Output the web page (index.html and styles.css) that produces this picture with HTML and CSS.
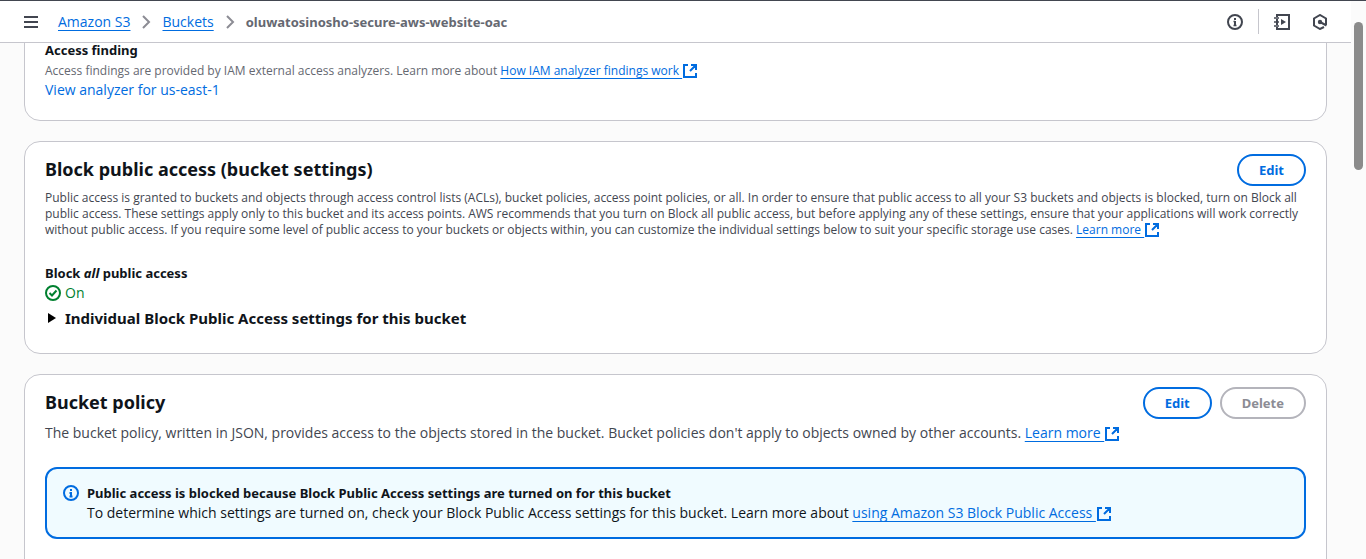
FILE: index.html
```html
<!DOCTYPE html>
<html lang="en">
<head>
<meta charset="utf-8">
<title>Bucket permissions - Amazon S3</title>
<link rel="stylesheet" href="styles.css">
</head>
<body>
<svg class="sprite" aria-hidden="true">
  <symbol id="external" viewBox="0 0 14 14"><path d="M5 1H1v12h12V9M8 1h5v5M12.5 1.5 7 7"/></symbol>
  <symbol id="info" viewBox="0 0 16 16"><circle cx="8" cy="8" r="7"/><path d="M8 4v2M6.500 8H8v4M6.500 11.500h3"/></symbol>
  <symbol id="chevron" viewBox="0 0 16 16"><path d="m5 2 6 6-6 6"/></symbol>
</svg>
<div class="shell">
  <div class="page">
    <header class="topbar">
      <button class="icon-button menu" type="button" aria-label="Open navigation">
        <svg class="icon" viewBox="0 0 16 16"><path d="M1 3h14M1 8h14M1 13h14"/></svg>
      </button>
      <nav class="crumbs" aria-label="Breadcrumbs">
        <a class="link" href="#">Amazon S3</a>
        <svg class="icon separator"><use href="#chevron"/></svg>
        <a class="link" href="#">Buckets</a>
        <svg class="icon separator"><use href="#chevron"/></svg>
        <span class="current">oluwatosinosho-secure-aws-website-oac</span>
      </nav>
      <div class="tools">
        <button class="icon-button" type="button" aria-label="Info"><svg class="icon info-small" viewBox="0 0 16 16"><circle cx="8" cy="8" r="7"/><path d="M8 4v2M8 7v5"/><path class="thin" d="M6.500 7.500H8M6.500 11.500h3"/></svg></button>
        <span class="divider"></span>
        <button class="icon-button" type="button" aria-label="Tutorials">
          <svg class="icon" viewBox="0 0 16 16"><path d="M3 3V1h12v14H3v-2M3 5v6"/><path class="thin" d="M0 4h5M0 8h5M0 12h5"/><path class="solid" d="M7 5v6l5-3z"/></svg>
        </button>
        <button class="icon-button" type="button" aria-label="Diagnostics">
          <svg class="icon" viewBox="0 0 16 16"><path d="M12 13 8 15l-6-3.500v-7L8 1l6 3.500V11M8 8l6.500 3.500"/><circle class="solid" cx="8" cy="8" r="2.200"/></svg>
        </button>
      </div>
    </header>

    <main class="content">
      <section class="card scrolled">
        <h3 class="label">Access finding</h3>
        <p class="small muted finding">Access findings are provided by IAM external access analyzers. Learn more about <a class="link" href="#">How IAM analyzer findings work&nbsp;</a><svg class="external"><use href="#external"/></svg></p>
        <a class="plain-link" href="#">View analyzer for us-east-1</a>
      </section>

      <section class="card">
        <div class="card-head">
          <h2>Block public access (bucket settings)</h2>
          <button class="button" type="button">Edit</button>
        </div>
        <p class="small intro">Public access is granted to buckets and objects through access control lists (ACLs), bucket policies, access point policies, or all. In order to ensure that public access to all your S3 buckets and objects is blocked, turn on Block all public access. These settings apply only to this bucket and its access points. AWS recommends that you turn on Block all public access, but before applying any of these settings, ensure that your applications will work correctly without public access. If you require some level of public access to your buckets or objects within, you can customize the individual settings below to suit your specific storage use cases. <a class="link" href="#">Learn more&nbsp;</a><svg class="external"><use href="#external"/></svg></p>
        <h3 class="label">Block <em>all</em> public access</h3>
        <p class="status"><svg class="icon" viewBox="0 0 16 16"><circle cx="8" cy="8" r="7"/><path d="m4.500 8 2.500 2.500L11.500 5.500"/></svg>On</p>
        <button class="expander" type="button" aria-expanded="false">
          <svg class="caret" viewBox="0 0 10 10"><path d="M1 0v10l8-5z"/></svg>Individual Block Public Access settings for this bucket
        </button>
      </section>

      <section class="card last">
        <div class="card-head">
          <h2>Bucket policy</h2>
          <div class="actions">
            <button class="button" type="button">Edit</button>
            <button class="button" type="button" disabled>Delete</button>
          </div>
        </div>
        <p class="policy">The bucket policy, written in JSON, provides access to the objects stored in the bucket. Bucket policies don't apply to objects owned by other accounts. <a class="link" href="#">Learn more&nbsp;</a><svg class="external"><use href="#external"/></svg></p>
        <div class="alert" role="status">
          <svg class="icon"><use href="#info"/></svg>
          <div>
            <h3 class="label">Public access is blocked because Block Public Access settings are turned on for this bucket</h3>
            <p>To determine which settings are turned on, check your Block Public Access settings for this bucket. Learn more about <a class="link" href="#">using Amazon S3 Block Public Access&nbsp;</a><svg class="external"><use href="#external"/></svg></p>
          </div>
        </div>
      </section>
    </main>
  </div>
  <div class="scrollbar" aria-hidden="true"><div class="thumb"></div></div>
</div>
</body>
</html>
```
FILE: styles.css
```css
* { box-sizing: border-box; }

body {
  margin: 0;
  background: #fbfbfb;
  color: #0f141a;
  font: 14px/20px "Open Sans", "Noto Sans", sans-serif;
}

h2, h3, p { margin: 0; }
button { font: inherit; }

h2, .label, .button, .expander, .current {
  font-family: "Noto Sans", "Open Sans", sans-serif;
  font-weight: 700;
}

.sprite { position: absolute; width: 0; height: 0; }

.shell {
  display: flex;
  height: 100vh;
  overflow: hidden;
  border-top: 1px solid #424650;
}

.page { flex: 1; min-width: 0; }

.scrollbar { width: 15px; padding: 21px 3px 0; }
.thumb { height: 148px; border-radius: 5px; background: #8b8b8b; }

.icon {
  flex: none;
  width: 16px;
  height: 16px;
  fill: none;
  stroke: currentColor;
  stroke-width: 2;
}
.icon .solid { fill: currentColor; stroke: none; }
.icon .thin { stroke-width: 1.5; }

.external {
  width: 14px;
  height: 14px;
  margin-left: 1px;
  vertical-align: -3px;
  fill: none;
  stroke: #006ce0;
  stroke-width: 2;
}

.topbar {
  position: relative;
  z-index: 1;
  display: flex;
  align-items: center;
  height: 42px;
  padding: 0 23px;
  border-bottom: 1px solid #c6c6cd;
  background: #fff;
}

.icon-button {
  display: flex;
  padding: 0;
  border: 0;
  background: none;
  color: #424650;
}

.crumbs { display: flex; align-items: center; gap: 8px; margin-left: 19px; }
.separator { color: #8c8c94; }
.current { color: #656871; font-size: 13px; }

.tools { display: flex; align-items: center; gap: 22px; margin-left: auto; }
.divider { width: 1px; height: 25px; margin: 0 -7px; background: #c6c6cd; }

.link {
  color: #006ce0;
  text-decoration: underline 1px;
  text-underline-offset: 3px;
  text-decoration-skip-ink: none;
}
.plain-link { color: #006ce0; text-decoration: none; }

.content { display: flex; flex-direction: column; gap: 20px; padding: 0 24px; }

.card {
  padding: 12px 20px 20px;
  border: 1px solid #c6c6cd;
  border-radius: 16px;
  background: #fff;
}
.scrolled { margin-top: -24px; padding-top: 20px; }
.last { padding-bottom: 40px; }

.card-head { display: flex; align-items: flex-start; justify-content: space-between; }
.card-head h2 { padding-top: 3px; font-size: 18px; line-height: 24px; }
.actions { display: flex; gap: 8px; }

.button {
  height: 32px;
  padding: 0 20px;
  border: 2px solid #006ce0;
  border-radius: 16px;
  background: #fff;
  color: #006ce0;
  font-size: 13px;
}
.button:disabled { border-color: #b4b4bb; color: #8c8c94; }

.label { font-size: 13px; }
.small { font-size: 12px; line-height: 16px; }
.muted { color: #656871; }
.finding { margin: 3px 0 1px; }
.intro { margin: 4px 0 25px; color: #424650; }
.policy { margin: 4px 0 24px; color: #424650; }

.status { display: flex; align-items: center; gap: 4px; color: #00802f; }

.expander {
  display: flex;
  align-items: center;
  gap: 8px;
  margin: 3px 0;
  padding: 0 0 0 2px;
  border: 0;
  background: none;
  color: inherit;
  font-size: 15px;
  line-height: 24px;
}
.caret { width: 10px; height: 10px; }

.alert {
  display: flex;
  gap: 8px;
  padding: 14px 16px;
  border: 2px solid #006ce0;
  border-radius: 12px;
  background: #f0fbff;
}
.alert .icon { margin-top: 2px; color: #006ce0; }
```
